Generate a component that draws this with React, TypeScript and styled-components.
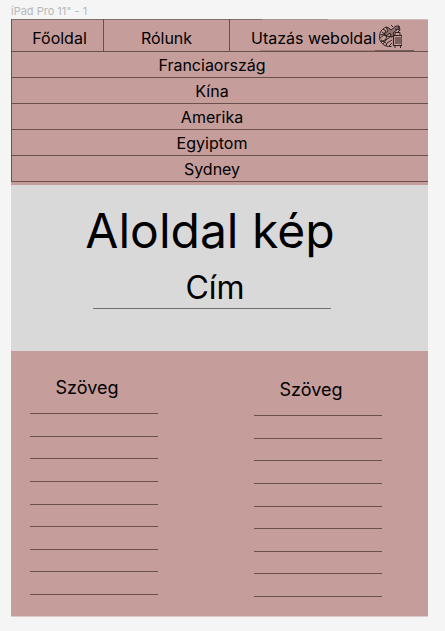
import React from "react";
import styled, { createGlobalStyle } from "styled-components";

const ink = "#69504f";
const rose = "#c59d9b";

const GlobalStyle = createGlobalStyle`
  * { box-sizing: border-box; }
  body {
    margin: 0;
    background: #f5f5f5;
    color: #000;
    font-family: Inter, "Liberation Sans", sans-serif;
    font-size: 16px;
  }
`;

const Canvas = styled.div`
  padding: 4px 17px 14px 11px;
`;

const FrameLabel = styled.div`
  height: 15px;
  font-size: 11px;
  line-height: 15px;
  color: #b8b8b8;
`;

const Frame = styled.main`
  background: ${rose};
  border-bottom: 1px solid #dfcaca;
`;

const Header = styled.header`
  padding-bottom: 3px;
`;

const Menu = styled.nav`
  border-left: 1px solid ${ink};
`;

const TopBar = styled.div`
  display: grid;
  grid-template-columns: 92fr 126fr 198fr;
  height: 33px;
  border-bottom: 1px solid ${ink};
  background: linear-gradient(90deg, #82706f 60%, #a59593 60% 76%, #c9bcbb 76%) top / 100% 1px no-repeat;
`;

const TopCell = styled.div`
  display: flex;
  align-items: center;
  justify-content: center;
  padding-top: 6px;
  border-right: 1px solid ${ink};

  &:first-child {
    padding-left: 4px;
  }

  &:last-child {
    justify-content: flex-start;
    padding-left: 21px;
    border-right: 0;
    background: linear-gradient(90deg, #a28180 75%, #765b5a 75%) 30px 100% / calc(100% - 44px) 1px no-repeat;
  }
`;

const MenuLink = styled.a`
  color: inherit;
  text-decoration: none;
  white-space: nowrap;
  line-height: 20px;
`;

const Brand = styled(MenuLink)`
  display: flex;
  align-items: center;
  gap: 2px;
`;

const Logo = styled.svg`
  flex: none;
  width: 24px;
  height: 24px;
  margin-top: -4px;
`;

const Destinations = styled.ul`
  margin: 0;
  padding: 0;
  list-style: none;
`;

const Destination = styled.li`
  height: 26px;
  padding: 3px 16px 0 0;
  border-bottom: 1px solid ${ink};
  text-align: center;
  line-height: 20px;
`;

const Hero = styled.section`
  display: flex;
  flex-direction: column;
  align-items: center;
  height: 166px;
  padding: 16px 15px 0 0;
  background: #d9d9d9;
`;

const Title = styled.h1`
  margin: 0;
  padding-right: 4px;
  font-size: 48px;
  font-weight: 400;
  line-height: 60px;
`;

const Subtitle = styled.h2`
  width: 59%;
  margin: 7px 0 0;
  padding-left: 6px;
  border-bottom: 1px solid #707070;
  font-size: 32px;
  font-weight: 400;
  line-height: 40px;
  text-align: center;
`;

const Columns = styled.div`
  display: grid;
  grid-template-columns: 1fr 1fr;
  gap: 96px;
  padding: 25px 46px 19px 19px;
`;

const Column = styled.section<{ $drop?: boolean }>`
  padding-top: ${(p) => (p.$drop ? 2 : 0)}px;
`;

const Heading = styled.h3`
  margin: 0 0 13px;
  padding-right: 14px;
  font-size: 18px;
  font-weight: 400;
  line-height: 24px;
  text-align: center;
`;

const Lines = styled.div`
  display: flex;
  flex-direction: column;
  justify-content: space-between;
  height: 182px;
`;

const Line = styled.hr`
  width: 100%;
  margin: 0;
  border: 0;
  border-top: 1px solid ${ink};
`;

const places = ["Franciaország", "Kína", "Amerika", "Egyiptom", "Sydney"];

function TravelLogo() {
  return (
    <Logo viewBox="0 0 24 24" fill="none" stroke="#2e2222" strokeWidth="1" strokeLinejoin="round" aria-hidden="true">
      <path d="M8 3C4 5 1.500 8 1.500 13c0 5 4 9 9 9.500h3" />
      <path d="M5 5l3 2-2 3-4 1M2 14l4-3 3 2-2 3-4 2M5 20l3-4 4-3 1-3M8 22l1-3 5-3M11 22l3-3M4 8l5 4 5 1M3 16l5 3" />
      <path d="M8 3l3 1 2 2 5-4h3l-1 3-5 4 1 3-3 1-1-4-4 3-2-2 4-3z" fill="#2e2222" fillOpacity="0.35" />
      <path d="M13 1l2 2M17 5l5 1M21 2l1 4-3 3" />
      <path d="M17 11V8.500h5V11" />
      <path d="M15.500 11.500h8.500v10h-8.500z" strokeWidth="1.2" />
      <path d="M18 13v7M20 13v7M22 13v7" />
      <path d="M17 22v2M22.500 22v2" />
    </Logo>
  );
}

function TextColumn({ drop }: { drop?: boolean }) {
  return (
    <Column $drop={drop}>
      <Heading>Szöveg</Heading>
      <Lines>
        {Array.from({ length: 9 }, (_, i) => (
          <Line key={i} />
        ))}
      </Lines>
    </Column>
  );
}

export default function App() {
  return (
    <>
      <GlobalStyle />
      <Canvas>
        <FrameLabel>iPad Pro 11" - 1</FrameLabel>
        <Frame>
          <Header>
            <Menu>
              <TopBar>
                <TopCell><MenuLink href="#fooldal">Főoldal</MenuLink></TopCell>
                <TopCell><MenuLink href="#rolunk">Rólunk</MenuLink></TopCell>
                <TopCell>
                  <Brand href="#top">Utazás weboldal<TravelLogo /></Brand>
                </TopCell>
              </TopBar>
              <Destinations>
                {places.map((place) => (
                  <Destination key={place}>
                    <MenuLink href={`#${place}`}>{place}</MenuLink>
                  </Destination>
                ))}
              </Destinations>
            </Menu>
          </Header>
          <Hero>
            <Title>Aloldal kép</Title>
            <Subtitle>Cím</Subtitle>
          </Hero>
          <Columns>
            <TextColumn />
            <TextColumn drop />
          </Columns>
        </Frame>
      </Canvas>
    </>
  );
}
